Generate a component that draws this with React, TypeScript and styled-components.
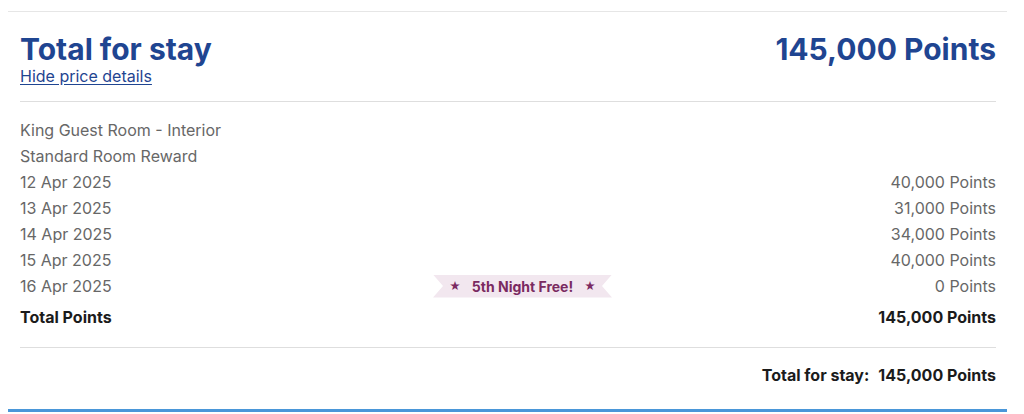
import styled, { createGlobalStyle } from "styled-components";

const GlobalStyle = createGlobalStyle`
  body {
    margin: 0;
    background: #ffffff;
    font-family: "Inter", "Liberation Sans", sans-serif;
  }
`;

const Panel = styled.section`
  margin: 11px 0 0 8px;
  width: 999px;
  box-sizing: border-box;
  padding: 0 11px 0 12px;
  border-top: 1px solid #e6e6e6;
  border-bottom: 3px solid #4a97d9;
`;

const Header = styled.div`
  display: flex;
  justify-content: space-between;
  align-items: flex-start;
  padding: 20px 0 15px;
  border-bottom: 1px solid #dedede;
`;

const TitleBlock = styled.div`
  display: flex;
  flex-direction: column;
`;

const Title = styled.h1`
  margin: 0;
  font-size: 30px;
  line-height: 34px;
  font-weight: 700;
  color: #1f4591;
`;

const DetailsLink = styled.a`
  font-size: 16px;
  line-height: 20px;
  color: #1f4591;
  text-decoration: underline;
  text-underline-offset: 2px;
  cursor: pointer;
`;

const Breakdown = styled.div`
  padding: 15px 0 17px;
  border-bottom: 1px solid #dedede;
`;

const Row = styled.div<{ $strong?: boolean }>`
  display: grid;
  grid-template-columns: 413px 179px 1fr;
  align-items: center;
  height: 26px;
  font-size: 16px;
  color: ${(p) => (p.$strong ? "#1b1b1b" : "#676767")};
  font-weight: ${(p) => (p.$strong ? 700 : 400)};
  margin-top: ${(p) => (p.$strong ? "5px" : "0")};
`;

const Amount = styled.span`
  grid-column: 3;
  text-align: right;
`;

const Ribbon = styled.span`
  grid-column: 2;
  display: flex;
  align-items: center;
  justify-content: center;
  gap: 11px;
  height: 23px;
  background: #f2e7ef;
  color: #7a2a61;
  font-size: 14px;
  font-weight: 700;
  clip-path: polygon(0 0, 100% 0, calc(100% - 10px) 50%, 100% 100%, 0 100%, 10px 50%);
`;

const Star = styled.span`
  font-size: 11px;
`;

const Footer = styled.div`
  display: flex;
  justify-content: flex-end;
  gap: 9px;
  padding: 14px 0 21px;
  font-size: 16px;
  line-height: 26px;
  font-weight: 700;
  color: #1b1b1b;
`;

const nights = [
  { date: "12 Apr 2025", points: "40,000 Points" },
  { date: "13 Apr 2025", points: "31,000 Points" },
  { date: "14 Apr 2025", points: "34,000 Points" },
  { date: "15 Apr 2025", points: "40,000 Points" },
  { date: "16 Apr 2025", points: "0 Points", free: true },
];

export default function App() {
  return (
    <>
      <GlobalStyle />
      <Panel>
        <Header>
          <TitleBlock>
            <Title>Total for stay</Title>
            <DetailsLink>Hide price details</DetailsLink>
          </TitleBlock>
          <Title>145,000 Points</Title>
        </Header>
        <Breakdown>
          <Row>King Guest Room - Interior</Row>
          <Row>Standard Room Reward</Row>
          {nights.map((n) => (
            <Row key={n.date}>
              <span>{n.date}</span>
              {n.free && (
                <Ribbon>
                  <Star>★</Star>
                  5th Night Free!
                  <Star>★</Star>
                </Ribbon>
              )}
              <Amount>{n.points}</Amount>
            </Row>
          ))}
          <Row $strong>
            <span>Total Points</span>
            <Amount>145,000 Points</Amount>
          </Row>
        </Breakdown>
        <Footer>
          <span>Total for stay:</span>
          <span>145,000 Points</span>
        </Footer>
      </Panel>
    </>
  );
}
